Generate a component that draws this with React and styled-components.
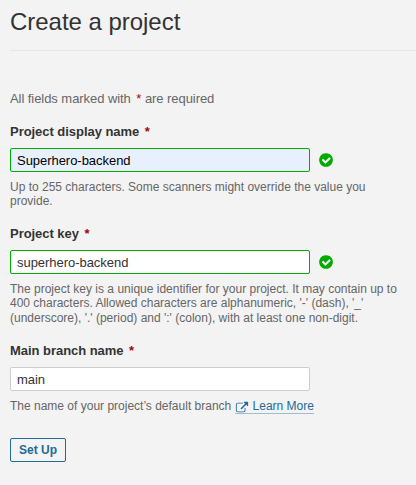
import React, { useState } from 'react';
import styled, { createGlobalStyle } from 'styled-components';

const GlobalStyle = createGlobalStyle`
  *, *::before, *::after { box-sizing: border-box; }
  body {
    margin: 0;
    background: #f3f3f3;
    color: #333;
    font-family: "Liberation Sans", Arial, sans-serif;
    font-size: 13px;
    line-height: 20px;
  }
`;

const Page = styled.main`
  display: flex;
  flex-direction: column;
  min-height: 485px;
  padding: 6px 0 0 10px;
`;

const Header = styled.header`
  height: 45px;
  width: 406px;
  border-bottom: 1px solid #e6e6e6;
`;

const Title = styled.h1`
  margin: 0;
  font-size: 24px;
  font-weight: 400;
  line-height: 32px;
  letter-spacing: -0.03px;
`;

const Form = styled.form`
  display: flex;
  flex-direction: column;
  align-items: flex-start;
  padding-top: 38px;
`;

const Intro = styled.p`
  margin: 0 0 13px;
  color: #666;
  font-size: 13px;
  letter-spacing: -0.06px;
  white-space: nowrap;
`;

const Mandatory = styled.em`
  color: #a4030f;
  font-style: normal;
  font-weight: ${(p) => (p.$light ? 400 : 700)};
  margin-left: 2px;
`;

const Field = styled.div`
  width: 396px;
  margin-bottom: ${(p) => p.$gap}px;
`;

const Label = styled.label`
  display: block;
  height: 26px;
  font-weight: 700;
  letter-spacing: -0.04px;
`;

const Control = styled.div`
  display: flex;
  align-items: center;
  gap: 8px;
  height: 24px;
`;

const Input = styled.input`
  width: 300px;
  height: 24px;
  padding: 0 6px;
  border: 1px solid ${(p) => (p.$valid ? '#00aa00' : '#cdcdcd')};
  border-radius: 2px;
  outline: none;
  background: ${(p) => (p.$filled ? '#e8f0fe' : '#fff')};
  color: ${(p) => (p.$filled ? '#000' : '#333')};
  font: 13px "Liberation Sans", Arial, sans-serif;
  letter-spacing: -0.04px;
`;

const Note = styled.p`
  margin: 8px 0 0;
  width: ${(p) => p.$width}px;
  color: #666;
  font-size: 12px;
  line-height: 14.4px;
`;

const Icon = styled.svg`
  display: block;
  flex: none;
  fill: #00aa00;
`;

const Link = styled.a`
  color: #236a97;
  text-decoration: none;
  border-bottom: 1px solid #9abfd3;
  white-space: nowrap;
`;

const LinkIcon = styled.svg`
  margin: -2px 4px -2px 0;
  vertical-align: -2px;
  fill: currentColor;
`;

const Submit = styled.button`
  width: 56px;
  height: 24px;
  padding: 0;
  border: 1px solid #236a97;
  border-radius: 2px;
  background: transparent;
  color: #236a97;
  font: 700 12px "Liberation Sans", Arial, sans-serif;
`;

function ValidIcon() {
  return (
    <Icon width="16" height="16" viewBox="0 0 16 16" aria-hidden="true">
      <path d="M12.607 6.554q0-.232-.152-.384l-.776-.768q-.161-.161-.384-.161t-.384.161L7.429 8.875 5.5 6.946q-.161-.161-.384-.161t-.384.161l-.776.768q-.152.152-.152.384 0 .223.152.375l3.089 3.089q.161.161.384.161.232 0 .393-.161l4.633-4.633q.152-.152.152-.375zM14.857 8q0 1.866-.92 3.442t-2.496 2.496-3.441.92-3.442-.92-2.496-2.496T1.142 8t.92-3.442 2.496-2.496T8 1.142t3.441.92 2.496 2.496.92 3.442z" />
    </Icon>
  );
}

function DetachIcon() {
  return (
    <LinkIcon width="14" height="14" viewBox="0 0 16 16" aria-hidden="true">
      <path d="M12 9.25v2.5A2.25 2.25 0 0 1 9.75 14h-6.5A2.25 2.25 0 0 1 1 11.75v-6.5A2.25 2.25 0 0 1 3.25 3h5.5c.14 0 .25.11.25.25v.5c0 .14-.11.25-.25.25h-5.5C2.562 4 2 4.563 2 5.25v6.5c0 .688.563 1.25 1.25 1.25h6.5c.688 0 1.25-.563 1.25-1.25v-2.5c0-.14.11-.25.25-.25h.5c.14 0 .25.11.25.25zm3-6.75v4c0 .273-.227.5-.5.5a.497.497 0 0 1-.352-.148l-1.375-1.375L7.68 10.57a.27.27 0 0 1-.18.078.27.27 0 0 1-.18-.078l-.89-.89a.27.27 0 0 1-.078-.18.27.27 0 0 1 .078-.18l5.093-5.093-1.375-1.375A.497.497 0 0 1 10 2.5c0-.273.227-.5.5-.5h4c.273 0 .5.227.5.5z" />
    </LinkIcon>
  );
}

function TextField({ id, label, initial, valid, filled, gap, noteWidth, children }) {
  const [value, setValue] = useState(initial);
  return (
    <Field $gap={gap}>
      <Label htmlFor={id}>
        {label} <Mandatory>*</Mandatory>
      </Label>
      <Control>
        <Input
          id={id}
          value={value}
          onChange={(e) => setValue(e.target.value)}
          spellCheck={false}
          $valid={valid}
          $filled={filled}
        />
        {valid && <ValidIcon />}
      </Control>
      <Note $width={noteWidth}>{children}</Note>
    </Field>
  );
}

export default function App() {
  return (
    <>
      <GlobalStyle />
      <Page>
        <Header>
          <Title>Create a project</Title>
        </Header>
        <Form onSubmit={(e) => e.preventDefault()}>
          <Intro>
            All fields marked with <Mandatory $light>*</Mandatory> are required
          </Intro>
          <TextField id="name" label="Project display name" initial="Superhero-backend" valid filled gap={15.2} noteWidth={370}>
            Up to 255 characters. Some scanners might override the value you provide.
          </TextField>
          <TextField id="key" label="Project key" initial="superhero-backend" valid gap={15.8} noteWidth={394}>
            The project key is a unique identifier for your project. It may contain up to 400 characters.
            Allowed characters are alphanumeric, '-' (dash), '_' (underscore), '.' (period) and ':' (colon),
            with at least one non-digit.
          </TextField>
          <TextField id="branch" label="Main branch name" initial="main" gap={24.6} noteWidth={394}>
            The name of your project’s default branch{' '}
            <Link href="#">
              <DetachIcon />
              Learn More
            </Link>
          </TextField>
          <Submit>Set Up</Submit>
        </Form>
      </Page>
    </>
  );
}
